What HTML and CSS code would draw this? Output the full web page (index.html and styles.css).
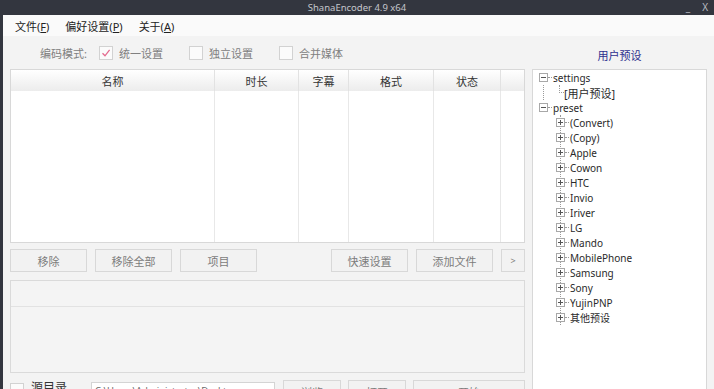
FILE: index.html
```html
<!DOCTYPE html>
<html lang="zh-CN">

<head>
    <meta charset="UTF-8">
    <meta name="viewport" content="width=device-width, initial-scale=1.0">
    <title>ShanaEncoder 4.9 x64</title>
    <link rel="stylesheet" href="styles.css">
</head>

<body>
    <div class="window">
        <div class="titlebar">
            <span></span>
            <span class="title">ShanaEncoder 4.9 x64</span>
            <span class="winbtns"><span>_</span><span>X</span></span>
        </div>

        <div class="frame">
            <div class="menubar">
                <span>文件(<u>F</u>)</span>
                <span>偏好设置(<u>P</u>)</span>
                <span>关于(<u>A</u>)</span>
            </div>

            <div class="toolbar">
                <div class="modes">
                    <span class="label">编码模式:</span>
                    <span class="check checked">
                        <svg width="10" height="10" viewBox="0 0 10 10"><path d="M1.5 5.2 L4 7.8 L8.6 1.8" fill="none" stroke="#e46a8e" stroke-width="1.3"/></svg>
                    </span>
                    <span class="label">统一设置</span>
                    <span class="check"></span>
                    <span class="label">独立设置</span>
                    <span class="check"></span>
                    <span class="label">合并媒体</span>
                </div>
                <div class="preset-title">用户预设</div>
            </div>

            <div class="content">
                <div class="left">
                    <div class="table">
                        <div class="cell head">名称</div>
                        <div class="cell head">时长</div>
                        <div class="cell head">字幕</div>
                        <div class="cell head">格式</div>
                        <div class="cell head">状态</div>
                        <div class="cell head"></div>
                        <div class="cell"></div>
                        <div class="cell"></div>
                        <div class="cell"></div>
                        <div class="cell"></div>
                        <div class="cell"></div>
                        <div class="cell"></div>
                    </div>

                    <div class="buttons">
                        <button class="btn">移除</button>
                        <button class="btn">移除全部</button>
                        <button class="btn">项目</button>
                        <span class="spacer"></span>
                        <button class="btn">快速设置</button>
                        <button class="btn">添加文件</button>
                        <button class="btn small">&gt;</button>
                    </div>

                    <div class="log">
                        <div class="log-head"></div>
                    </div>

                    <div class="output">
                        <span class="check"></span>
                        <span class="label">源目录</span>
                        <input class="path" type="text" value="C:\Users\Administrator\Desktop">
                        <button class="btn browse">浏览</button>
                        <button class="btn browse">打开</button>
                        <button class="btn start">开始</button>
                    </div>
                </div>

                <div class="tree">
                    <ul class="nodes">
                        <li>
                            <div class="row"><span class="box minus"></span><span class="dash"></span>settings</div>
                            <ul class="sub-settings">
                                <li><div class="row leaf"><span class="elbow"></span>[用户预设]</div></li>
                            </ul>
                        </li>
                        <li>
                            <div class="row"><span class="box minus"></span><span class="dash"></span>preset</div>
                            <ul class="sub-preset">
                                <li><div class="row"><span class="box plus"></span><span class="dash"></span>(Convert)</div></li>
                                <li><div class="row"><span class="box plus"></span><span class="dash"></span>(Copy)</div></li>
                                <li><div class="row"><span class="box plus"></span><span class="dash"></span>Apple</div></li>
                                <li><div class="row"><span class="box plus"></span><span class="dash"></span>Cowon</div></li>
                                <li><div class="row"><span class="box plus"></span><span class="dash"></span>HTC</div></li>
                                <li><div class="row"><span class="box plus"></span><span class="dash"></span>Invio</div></li>
                                <li><div class="row"><span class="box plus"></span><span class="dash"></span>Iriver</div></li>
                                <li><div class="row"><span class="box plus"></span><span class="dash"></span>LG</div></li>
                                <li><div class="row"><span class="box plus"></span><span class="dash"></span>Mando</div></li>
                                <li><div class="row"><span class="box plus"></span><span class="dash"></span>MobilePhone</div></li>
                                <li><div class="row"><span class="box plus"></span><span class="dash"></span>Samsung</div></li>
                                <li><div class="row"><span class="box plus"></span><span class="dash"></span>Sony</div></li>
                                <li><div class="row"><span class="box plus"></span><span class="dash"></span>YujinPNP</div></li>
                                <li><div class="row"><span class="box plus"></span><span class="dash"></span>其他预设</div></li>
                            </ul>
                        </li>
                    </ul>
                </div>
            </div>
        </div>
    </div>
</body>

</html>
```

FILE: styles.css
```css
* {
    padding: 0;
    margin: 0;
    box-sizing: border-box;
}

body {
    width: 714px;
    height: 389px;
    overflow: hidden;
    background-color: #33363f;
    font-family: "Noto Sans", "Noto Sans CJK SC", sans-serif;
    font-size: 11px;
    color: #333;
}

ul {
    list-style: none;
}

u {
    text-decoration: underline;
}

.window {
    width: 714px;
    height: 389px;
    display: flex;
    flex-direction: column;
}

/* title bar */
.titlebar {
    height: 15px;
    display: grid;
    grid-template-columns: 1fr auto 1fr;
    align-items: center;
    background-color: #33363f;
    color: #c4c6cc;
    font-size: 9.5px;
    line-height: 15px;
}

.winbtns {
    justify-self: end;
    display: flex;
    gap: 12px;
    padding-right: 6px;
    color: #b9bbc2;
    font-size: 10px;
}

.frame {
    flex: 1;
    display: flex;
    flex-direction: column;
    border-left: 3px solid #33363f;
    background-color: #f3f3f3;
}

/* menu */
.menubar {
    height: 21px;
    display: flex;
    align-items: center;
    gap: 16px;
    padding-left: 12px;
    background-color: #fafafa;
    color: #222;
    font-size: 11px;
}

.menubar u {
    text-decoration-thickness: 1px;
}

/* mode toolbar */
.toolbar {
    height: 33px;
    display: flex;
    align-items: center;
}

.modes {
    display: flex;
    align-items: center;
    padding-left: 37px;
    color: #808080;
}

.modes .label:first-child {
    margin-right: 12px;
}

.modes .check {
    margin-right: 6px;
}

.modes .check ~ .check {
    margin-left: 26px;
}

.check {
    width: 14px;
    height: 14px;
    flex: none;
    display: flex;
    justify-content: center;
    align-items: center;
    border: 1px solid #d2d2d2;
    background-color: #fbfbfb;
}

.preset-title {
    margin-left: auto;
    margin-right: 7px;
    width: 175px;
    text-align: center;
    color: #2d2f8e;
    padding-top: 5px;
}

/* main area */
.content {
    display: flex;
    gap: 7px;
    padding-left: 7px;
}

.left {
    width: 515px;
    display: flex;
    flex-direction: column;
}

.table {
    height: 174px;
    display: grid;
    grid-template-columns: 204px 84px 50px 85px 67px 1fr;
    grid-template-rows: 21px 1fr;
    border: 1px solid #d8d8d8;
    background-color: #fff;
}

.cell {
    border-right: 1px solid #e8e8e8;
}

.cell:nth-child(6n) {
    border-right: none;
}

.head {
    display: flex;
    justify-content: center;
    align-items: center;
    background: linear-gradient(#ffffff, #ececec);
    color: #333;
    border-right-color: #e2e2e2;
}

.buttons {
    margin-top: 6px;
    display: flex;
    gap: 8px;
}

.spacer {
    flex: 1;
}

.btn {
    width: 77px;
    height: 23px;
    flex: none;
    border: 1px solid #d8d8d8;
    background-color: #f2f2f2;
    color: #7c7c7c;
    font-family: inherit;
    font-size: 11px;
}

.btn.small {
    width: 24px;
    font-size: 9px;
}

.log {
    margin-top: 8px;
    height: 93px;
    border: 1px solid #dadada;
    background-color: #f4f4f4;
}

.log-head {
    height: 26px;
    border-bottom: 1px solid #e2e2e2;
}

.output {
    margin-top: 7px;
    display: flex;
    align-items: flex-start;
}

.output .check {
    margin-top: 3px;
}

.output .label {
    margin-left: 7px;
    width: 60px;
    font-size: 12px;
    line-height: 16px;
    color: #333;
}

.path {
    width: 184px;
    height: 20px;
    margin-top: 2px;
    padding: 0 0 4px 3px;
    border: 1px solid #d4d4d4;
    background-color: #fff;
    color: #6a6a6a;
    font-family: inherit;
    font-size: 9.5px;
}

.btn.browse {
    width: 58px;
    margin-left: 7px;
}

.path + .btn.browse {
    margin-left: 8px;
}

.btn.start {
    width: 112px;
    margin-left: 7px;
}

/* preset tree */
.tree {
    width: 175px;
    height: 330px;
    border: 1px solid #d8d8d8;
    background-color: #fff;
    padding-left: 6px;
    color: #2a2a2a;
    font-size: 10px;
}

.row {
    height: 15px;
    display: flex;
    align-items: center;
    white-space: nowrap;
}

.box {
    width: 9px;
    height: 9px;
    flex: none;
    border: 1px solid #a8a8a8;
    background-color: #fff;
}

.box.minus {
    background: #fff linear-gradient(#555, #555) center / 5px 1px no-repeat;
}

.box.plus {
    background:
        linear-gradient(#555, #555) center / 5px 1px no-repeat,
        linear-gradient(#555, #555) center / 1px 5px no-repeat,
        #fff;
}

.dash {
    width: 4px;
    margin-right: 1px;
    border-top: 1px dotted #9a9a9a;
}

.sub-settings {
    margin-left: 4px;
    border-left: 1px dotted #9a9a9a;
}

.leaf {
    padding-left: 15px;
    font-size: 11px;
}

.elbow {
    align-self: flex-start;
    width: 5px;
    height: 8px;
    border-left: 1px dotted #9a9a9a;
    border-bottom: 1px dotted #9a9a9a;
}

.sub-preset {
    margin-left: 21px;
    border-left: 1px dotted #9a9a9a;
}

.sub-preset .box {
    margin-left: -5px;
}
```
